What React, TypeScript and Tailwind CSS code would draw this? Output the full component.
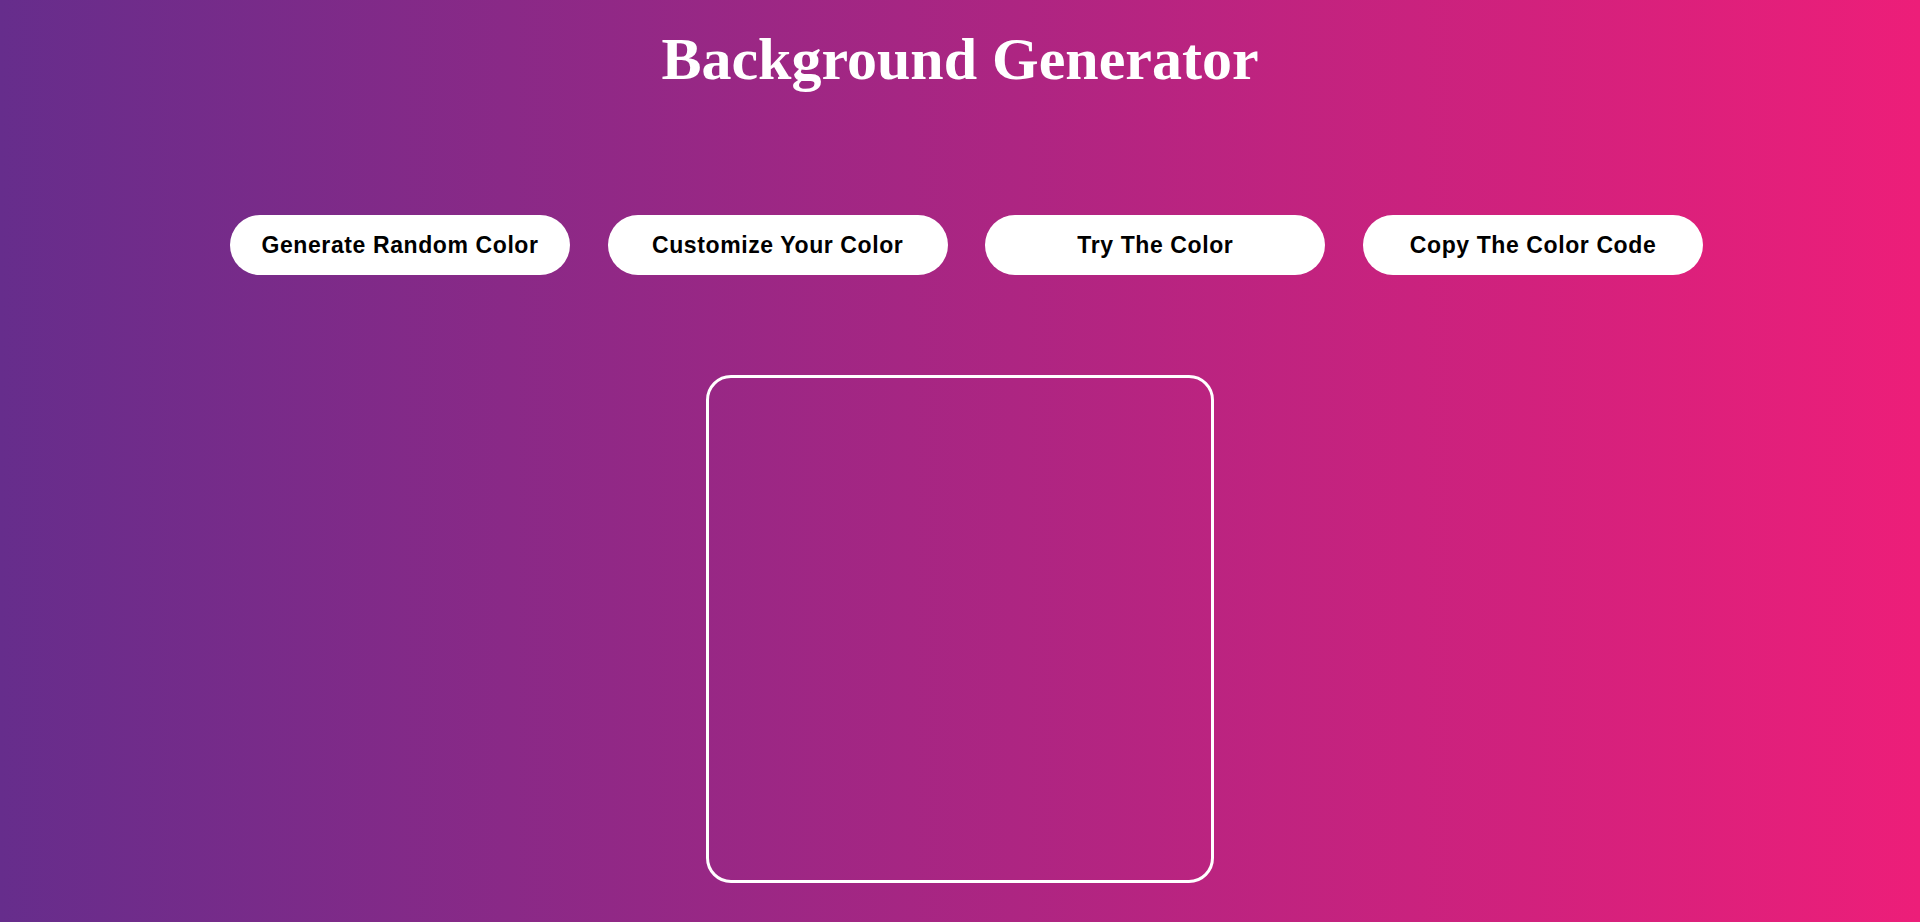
import React from 'react';

const buttons = ['Generate Random Color', 'Customize Your Color', 'Try The Color', 'Copy The Color Code'];

export default function App() {
  return (
    <div className="min-h-screen w-full bg-[linear-gradient(to_right,#662D8C,#ED1E79)] overflow-hidden">
      {/* Title */}
      <h1 className="pt-[29px] text-center text-white font-bold text-[60px] leading-[60px] font-['Liberation_Serif','Times_New_Roman',serif]">
        Background Generator
      </h1>

      {/* Action buttons */}
      <div className="mt-[126px] flex pl-[230px] gap-[37.7px]">
        {buttons.map((label) => (
          <button
            key={label}
            className="w-[340px] h-[60px] rounded-full bg-white text-black font-bold text-[23px] tracking-[0.6px] font-['Liberation_Sans',Arial,sans-serif]"
          >
            {label}
          </button>
        ))}
      </div>

      {/* Preview box */}
      <div className="mt-[100px] flex justify-center">
        <div className="w-[508px] h-[508px] rounded-[25px] border-[3px] border-white" />
      </div>
    </div>
  );
}
